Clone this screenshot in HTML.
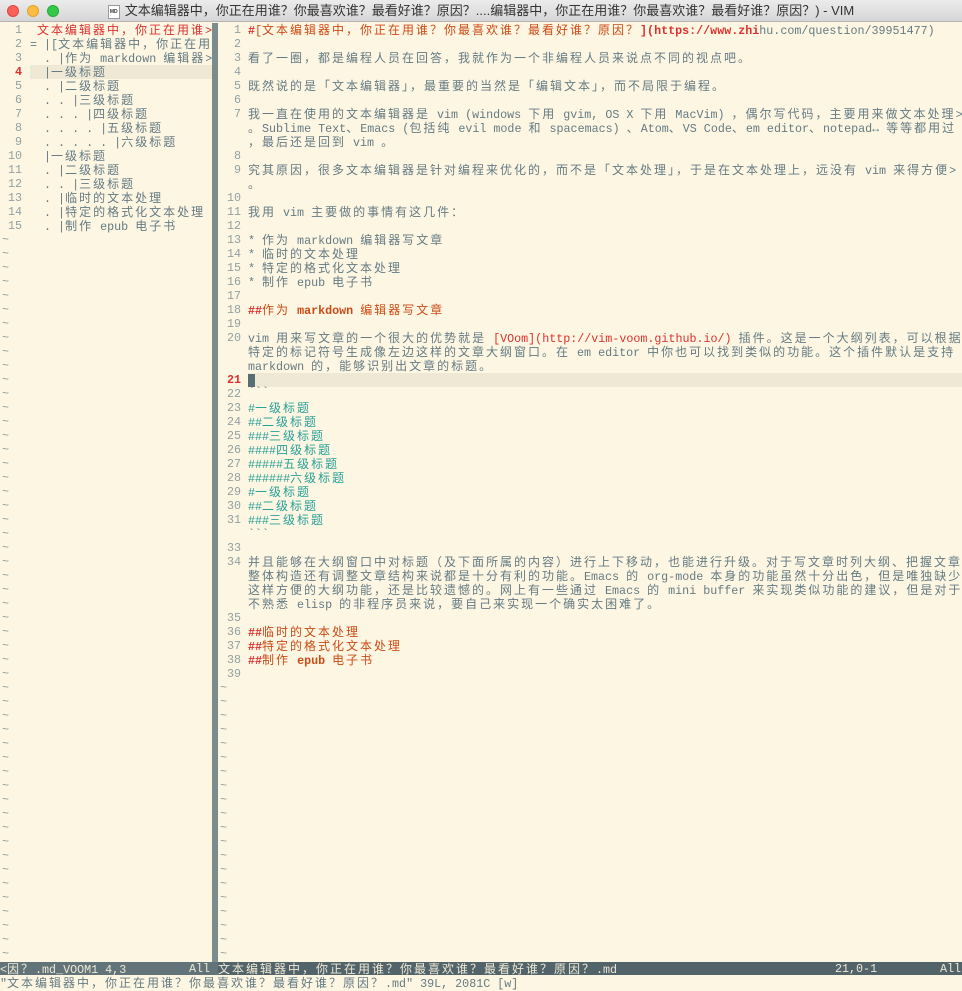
<!DOCTYPE html>
<html><head><meta charset="utf-8"><style>
*{margin:0;padding:0;box-sizing:border-box}
body{width:962px;height:991px;background:#fdf6e3;position:relative;overflow:hidden;font:11.7px "Liberation Mono","Noto Sans CJK SC",monospace;color:#657b83}
.tb{position:absolute;left:0;top:0;width:962px;height:22px;background:linear-gradient(#ececec,#d6d6d6);border-bottom:1px solid #b5b5b5;text-align:center;font:13px "Liberation Sans","Noto Sans CJK SC",sans-serif;color:#333;line-height:22px}
.dot{position:absolute;top:5px;width:12px;height:12px;border-radius:50%}
.r{position:absolute;height:14px;line-height:14px;white-space:pre}
i{font-style:normal;font-family:"Noto Sans CJK SC",sans-serif;font-size:12px;letter-spacing:2px}
.n{position:absolute;height:14px;line-height:14px;text-align:right;color:#93a1a1;white-space:pre}
.ln{left:0;width:22px}
.rn{left:218px;width:23px}
.lt{left:30px;width:182px;overflow:hidden}
.rt{left:248px;width:714px;overflow:hidden}
.cur{color:#dc322f;font-weight:bold}
.red{color:#dc322f}.org{color:#cb4b16}.b{font-weight:bold}.cy{color:#2aa198}
.sep{position:absolute;left:212px;top:23px;width:6px;height:952px;background:#7b8c8d}
.cl{position:absolute;height:14px;background:#eee8d5}
.t{position:absolute;color:#93a1a1;line-height:14px;white-space:pre}
</style></head><body>
<div class="tb"><span class="dot" style="left:7px;background:#fc605b;border:1px solid #de4640"></span><span class="dot" style="left:27px;background:#fdbc40;border:1px solid #dea135"></span><span class="dot" style="left:47px;background:#34c84a;border:1px solid #27aa35"></span><span style="display:inline-block;width:12px;height:14px;background:#fff;border:1px solid #999;vertical-align:middle;margin-right:5px;font-size:5px;line-height:12px;font-weight:bold">MD</span>文本编辑器中，你正在用谁？你最喜欢谁？最看好谁？原因？....编辑器中，你正在用谁？你最喜欢谁？最看好谁？原因？) - VIM</div>
<div class="sep"></div>
<div class="cl" style="left:30px;top:65px;width:182px"></div>
<div class="cl" style="left:248px;top:373px;width:714px"></div>
<div style="position:absolute;left:248px;top:374px;width:7px;height:13px;background:#586e75"></div>

<div class="n ln" style="top:23px">1</div><div class="r lt red" style="top:23px"> <i>文本编辑器中，你正在用谁</i>&gt;</div>
<div class="n ln" style="top:37px">2</div><div class="r" style="left:30px;top:37px">= |[<i>文本编辑器中，你正在用</i></div>
<div class="n ln" style="top:51px">3</div><div class="r lt" style="top:51px">  . |<i>作为</i> markdown <i>编辑器</i>&gt;</div>
<div class="n ln cur" style="top:65px">4</div><div class="r lt" style="top:65px">  |<i>一级标题</i></div>
<div class="n ln" style="top:79px">5</div><div class="r lt" style="top:79px">  . |<i>二级标题</i></div>
<div class="n ln" style="top:93px">6</div><div class="r lt" style="top:93px">  . . |<i>三级标题</i></div>
<div class="n ln" style="top:107px">7</div><div class="r lt" style="top:107px">  . . . |<i>四级标题</i></div>
<div class="n ln" style="top:121px">8</div><div class="r lt" style="top:121px">  . . . . |<i>五级标题</i></div>
<div class="n ln" style="top:135px">9</div><div class="r lt" style="top:135px">  . . . . . |<i>六级标题</i></div>
<div class="n ln" style="top:149px">10</div><div class="r lt" style="top:149px">  |<i>一级标题</i></div>
<div class="n ln" style="top:163px">11</div><div class="r lt" style="top:163px">  . |<i>二级标题</i></div>
<div class="n ln" style="top:177px">12</div><div class="r lt" style="top:177px">  . . |<i>三级标题</i></div>
<div class="n ln" style="top:191px">13</div><div class="r lt" style="top:191px">  . |<i>临时的文本处理</i></div>
<div class="n ln" style="top:205px">14</div><div class="r lt" style="top:205px">  . |<i>特定的格式化文本处理</i></div>
<div class="n ln" style="top:219px">15</div><div class="r lt" style="top:219px">  . |<i>制作</i> epub <i>电子书</i></div>
<div class="t" style="left:2px;top:233px">~
~
~
~
~
~
~
~
~
~
~
~
~
~
~
~
~
~
~
~
~
~
~
~
~
~
~
~
~
~
~
~
~
~
~
~
~
~
~
~
~
~
~
~
~
~
~
~
~
~
~
~</div>

<div class="n rn" style="top:23px">1</div><div class="r rt" style="top:23px"><span class="red b">#</span><span class="org">[<i>文本编辑器中，你正在用谁？你最喜欢谁？最看好谁？原因？</i></span><span class="red b">](https://www.zhi</span>hu.com/question/39951477)</div>
<div class="n rn" style="top:37px">2</div>
<div class="n rn" style="top:51px">3</div><div class="r rt" style="top:51px"><i>看了一圈，都是编程人员在回答，我就作为一个非编程人员来说点不同的视点吧。</i></div>
<div class="n rn" style="top:65px">4</div>
<div class="n rn" style="top:79px">5</div><div class="r rt" style="top:79px"><i>既然说的是「文本编辑器」，最重要的当然是「编辑文本」，而不局限于编程。</i></div>
<div class="n rn" style="top:93px">6</div>
<div class="n rn" style="top:107px">7</div><div class="r rt" style="top:107px"><i>我一直在使用的文本编辑器是</i> vim (windows <i>下用</i> gvim, OS X <i>下用</i> MacVim) <i>，偶尔写代码，主要用来做文本处理</i>&gt;</div>
<div class="r rt" style="top:121px"><i>。</i>Sublime Text<i>、</i>Emacs (<i>包括纯</i> evil mode <i>和</i> spacemacs) <i>、</i>Atom<i>、</i>VS Code<i>、</i>em editor<i>、</i>notepad↔ <i>等等都用过</i></div>
<div class="r rt" style="top:135px"><i>，最后还是回到</i> vim <i>。</i></div>
<div class="n rn" style="top:149px">8</div>
<div class="n rn" style="top:163px">9</div><div class="r rt" style="top:163px"><i>究其原因，很多文本编辑器是针对编程来优化的，而不是「文本处理」，于是在文本处理上，远没有</i> vim <i>来得方便</i>&gt;</div>
<div class="r rt" style="top:177px"><i>。</i></div>
<div class="n rn" style="top:191px">10</div>
<div class="n rn" style="top:205px">11</div><div class="r rt" style="top:205px"><i>我用</i> vim <i>主要做的事情有这几件：</i></div>
<div class="n rn" style="top:219px">12</div>
<div class="n rn" style="top:233px">13</div><div class="r rt" style="top:233px">* <i>作为</i> markdown <i>编辑器写文章</i></div>
<div class="n rn" style="top:247px">14</div><div class="r rt" style="top:247px">* <i>临时的文本处理</i></div>
<div class="n rn" style="top:261px">15</div><div class="r rt" style="top:261px">* <i>特定的格式化文本处理</i></div>
<div class="n rn" style="top:275px">16</div><div class="r rt" style="top:275px">* <i>制作</i> epub <i>电子书</i></div>
<div class="n rn" style="top:289px">17</div>
<div class="n rn" style="top:303px">18</div><div class="r rt" style="top:303px"><span class="red b">##</span><span class="org"><i>作为</i> <b>markdown</b> <i>编辑器写文章</i></span></div>
<div class="n rn" style="top:317px">19</div>
<div class="n rn" style="top:331px">20</div><div class="r rt" style="top:331px">vim <i>用来写文章的一个很大的优势就是</i> <span class="red">[VOom](http://vim-voom.github.io/)</span> <i>插件。这是一个大纲列表，可以根据</i></div>
<div class="r rt" style="top:345px"><i>特定的标记符号生成像左边这样的文章大纲窗口。在</i> em editor <i>中你也可以找到类似的功能。这个插件默认是支持</i></div>
<div class="r rt" style="top:359px">markdown <i>的，能够识别出文章的标题。</i></div>
<div class="n rn cur" style="top:373px">21</div>
<div class="n rn" style="top:387px">22</div><div class="r rt" style="top:385px">&#96;&#96;&#96;</div>
<div class="n rn" style="top:401px">23</div><div class="r rt cy" style="top:401px">#<i>一级标题</i></div>
<div class="n rn" style="top:415px">24</div><div class="r rt cy" style="top:415px">##<i>二级标题</i></div>
<div class="n rn" style="top:429px">25</div><div class="r rt cy" style="top:429px">###<i>三级标题</i></div>
<div class="n rn" style="top:443px">26</div><div class="r rt cy" style="top:443px">####<i>四级标题</i></div>
<div class="n rn" style="top:457px">27</div><div class="r rt cy" style="top:457px">#####<i>五级标题</i></div>
<div class="n rn" style="top:471px">28</div><div class="r rt cy" style="top:471px">######<i>六级标题</i></div>
<div class="n rn" style="top:485px">29</div><div class="r rt cy" style="top:485px">#<i>一级标题</i></div>
<div class="n rn" style="top:499px">30</div><div class="r rt cy" style="top:499px">##<i>二级标题</i></div>
<div class="n rn" style="top:513px">31</div><div class="r rt cy" style="top:513px">###<i>三级标题</i></div>
<div class="r rt" style="top:527px">&#96;&#96;&#96;</div>
<div class="n rn" style="top:541px">33</div>
<div class="n rn" style="top:555px">34</div><div class="r rt" style="top:555px"><i>并且能够在大纲窗口中对标题（及下面所属的内容）进行上下移动，也能进行升级。对于写文章时列大纲、把握文章</i></div>
<div class="r rt" style="top:569px"><i>整体构造还有调整文章结构来说都是十分有利的功能。</i>Emacs <i>的</i> org-mode <i>本身的功能虽然十分出色，但是唯独缺少</i></div>
<div class="r rt" style="top:583px"><i>这样方便的大纲功能，还是比较遗憾的。网上有一些通过</i> Emacs <i>的</i> mini buffer <i>来实现类似功能的建议，但是对于</i></div>
<div class="r rt" style="top:597px"><i>不熟悉</i> elisp <i>的非程序员来说，要自己来实现一个确实太困难了。</i></div>
<div class="n rn" style="top:611px">35</div>
<div class="n rn" style="top:625px">36</div><div class="r rt" style="top:625px"><span class="red b">##</span><span class="org"><i>临时的文本处理</i></span></div>
<div class="n rn" style="top:639px">37</div><div class="r rt" style="top:639px"><span class="red b">##</span><span class="org"><i>特定的格式化文本处理</i></span></div>
<div class="n rn" style="top:653px">38</div><div class="r rt" style="top:653px"><span class="red b">##</span><span class="org"><i>制作</i> <b>epub</b> <i>电子书</i></span></div>
<div class="n rn" style="top:667px">39</div>
<div class="t" style="left:220px;top:681px">~
~
~
~
~
~
~
~
~
~
~
~
~
~
~
~
~
~
~
~</div>

<div class="r" style="left:0;top:962px;width:212px;height:13px;background:#627479;color:#eee8d5"><span>&lt;<i>因？</i>.md_VOOM1 4,3</span><span style="position:absolute;right:2px">All</span></div>
<div class="r" style="left:212px;top:962px;width:6px;height:13px;background:#627479"></div>
<div class="r" style="left:218px;top:962px;width:744px;height:13px;background:#52646a;color:#eee8d5"><i>文本编辑器中，你正在用谁？你最喜欢谁？最看好谁？原因？</i>.md<span style="position:absolute;left:617px">21,0-1</span><span style="position:absolute;left:722px">All</span></div>
<div class="r" style="left:0;top:976px;width:962px">"<i>文本编辑器中，你正在用谁？你最喜欢谁？最看好谁？原因？</i>.md" 39L, 2081C [w]</div>
</body></html>
